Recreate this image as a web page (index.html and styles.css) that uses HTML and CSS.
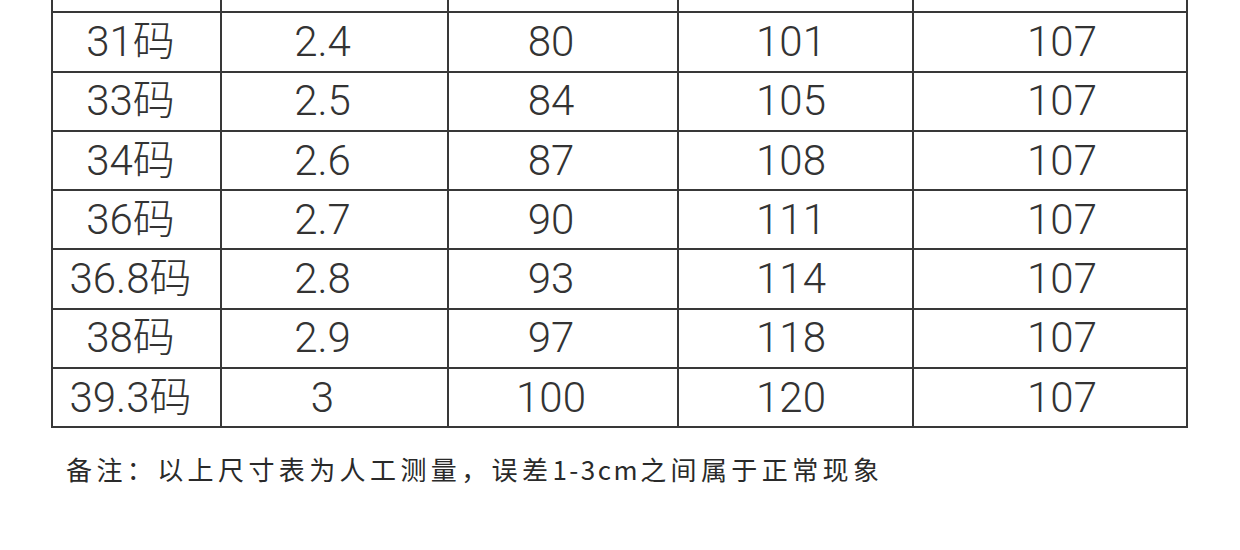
FILE: index.html
```html
<!DOCTYPE html>
<html lang="zh-CN">
<head>
<meta charset="utf-8">
<title>尺码表</title>
<link rel="stylesheet" href="styles.css">
</head>
<body>
<div class="page">
  <table class="size-table">
    <colgroup>
      <col class="c1"><col class="c2"><col class="c3"><col class="c4"><col class="c5">
    </colgroup>
    <tbody>
      <tr class="cut"><td>30码</td><td>2.3</td><td>77</td><td>98</td><td>107</td></tr>
      <tr><td>31码</td><td>2.4</td><td>80</td><td>101</td><td>107</td></tr>
      <tr><td>33码</td><td>2.5</td><td>84</td><td>105</td><td>107</td></tr>
      <tr><td>34码</td><td>2.6</td><td>87</td><td>108</td><td>107</td></tr>
      <tr><td>36码</td><td>2.7</td><td>90</td><td>111</td><td>107</td></tr>
      <tr><td>36.8码</td><td>2.8</td><td>93</td><td>114</td><td>107</td></tr>
      <tr><td>38码</td><td>2.9</td><td>97</td><td>118</td><td>107</td></tr>
      <tr><td>39.3码</td><td>3</td><td>100</td><td>120</td><td>107</td></tr>
    </tbody>
  </table>
  <p class="note">备注：以上尺寸表为人工测量，误差<span class="latin">1-3cm</span>之间属于正常现象</p>
</div>
</body>
</html>
```
FILE: styles.css
```css
html, body {
  margin: 0;
  padding: 0;
  background: #ffffff;
}

.page {
  width: 1240px;
  height: 550px;
  overflow: hidden;
  padding-left: 51px;
  box-sizing: border-box;
}

.size-table {
  border-collapse: collapse;
  table-layout: fixed;
  width: 1135px;
  margin-top: -48px;
  font-family: "Roboto", "Liberation Sans", "Noto Sans CJK SC", sans-serif;
  font-weight: 300;
  font-size: 42px;
  color: #333333;
}

.c1 { width: 169px; }
.c2 { width: 227px; }
.c3 { width: 230px; }
.c4 { width: 235px; }
.c5 { width: 274px; }

.size-table td {
  border: 2px solid #383838;
  height: 57.3px;
  padding: 0;
  text-align: center;
  vertical-align: middle;
  line-height: 1;
}

.size-table td:nth-child(1) { padding-right: 12px; }
.size-table td:nth-child(2) { padding-right: 24px; }
.size-table td:nth-child(3) { padding-right: 24px; }
.size-table td:nth-child(4) { padding-right: 9px; }
.size-table td:nth-child(5) { padding-left: 24px; }

.note {
  margin: 28px 0 0 15px;
  font-family: "Noto Sans CJK SC", "Noto Sans", sans-serif;
  font-size: 26px;
  letter-spacing: 4.4px;
  color: #2a2a2a;
  line-height: 1;
}

.note .latin {
  letter-spacing: 2.5px;
}
```
